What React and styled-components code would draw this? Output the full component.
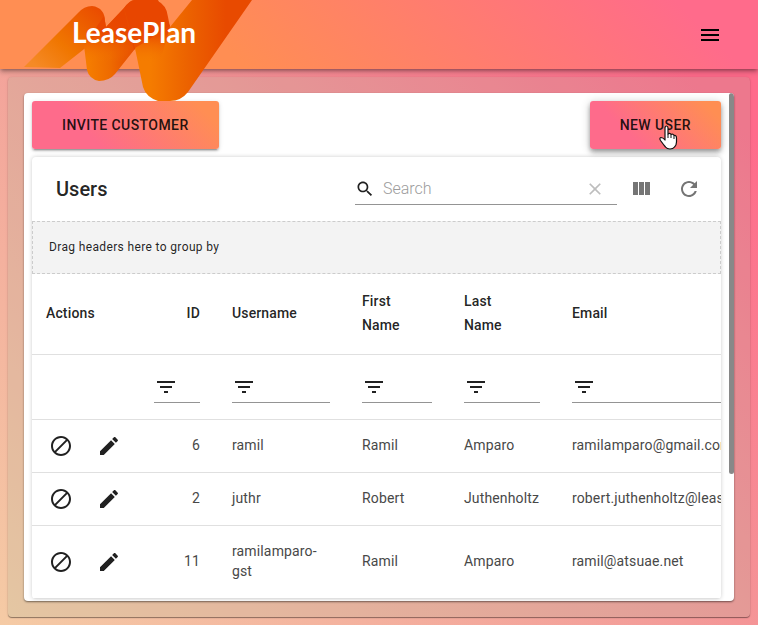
import React from 'react';
import styled, { createGlobalStyle, css } from 'styled-components';

const GlobalStyle = createGlobalStyle`
  *, *::before, *::after { box-sizing: border-box; }
  body {
    margin: 0;
    font-family: Roboto, "Liberation Sans", sans-serif;
    color: rgba(0, 0, 0, 0.87);
  }
`;

const Page = styled.div`
  display: flex;
  flex-direction: column;
  height: 100vh;
  background: linear-gradient(45deg, #f5cba5 0%, #f39a98 50%, #ff6b8b 90%);
`;

const Header = styled.header`
  position: relative;
  z-index: 2;
  flex: none;
  display: flex;
  align-items: center;
  justify-content: flex-end;
  height: 69px;
  padding: 0 36px;
  background: linear-gradient(45deg, #ff8e53 30%, #ff6b8b 90%);
  box-shadow: 0 2px 4px -1px rgba(0, 0, 0, 0.4), 0 4px 5px rgba(0, 0, 0, 0.14);
`;

const Logo = styled.svg`
  position: absolute;
  top: 0;
  left: 24px;
`;

const IconButton = styled.button`
  display: inline-flex;
  align-items: center;
  justify-content: center;
  flex: none;
  width: ${(p) => p.$size || 24}px;
  height: ${(p) => p.$size || 24}px;
  padding: 0;
  border: 0;
  background: none;
  color: ${(p) => p.$color || 'inherit'};
  cursor: pointer;
`;

const Glyph = styled.svg`
  display: block;
  flex: none;
  fill: currentColor;
`;

const Main = styled.main`
  flex: 1;
  min-height: 0;
  display: flex;
  margin: 8px;
  padding: 16px;
  border-radius: 4px;
  background: rgba(150, 185, 155, 0.17);
  box-shadow: 0 1px 1px rgba(0, 0, 0, 0.4), 0 0 3px rgba(0, 0, 0, 0.1);
`;

const Card = styled.section`
  flex: 1;
  min-width: 0;
  display: flex;
  overflow: hidden;
  border-radius: 4px;
  background: #fff;
  box-shadow: 0 1px 2px rgba(0, 0, 0, 0.5);
`;

const Scroller = styled.div`
  flex: 1;
  min-width: 0;
  overflow: auto;
  padding: 8px;
  scrollbar-width: none;
`;

const Rail = styled.div`
  flex: none;
  width: 5px;
`;

const Thumb = styled.div`
  height: 75%;
  border-radius: 3px;
  background: #888;
`;

const ButtonBar = styled.div`
  display: flex;
  justify-content: space-between;
  align-items: flex-start;
  margin-bottom: 8px;
`;

const GradientButton = styled.button`
  position: relative;
  height: 48px;
  padding: 0 30px;
  border: 0;
  border-radius: 3px;
  background: linear-gradient(45deg, #fe6b8b 30%, #ff8e53 90%);
  color: rgba(0, 0, 0, 0.87);
  font: 500 14px/24px Roboto, "Liberation Sans", sans-serif;
  letter-spacing: 0.03em;
  text-transform: uppercase;
  cursor: pointer;
  box-shadow: ${(p) =>
    p.$raised
      ? '0 2px 4px -1px rgba(0,0,0,.2), 0 4px 5px rgba(0,0,0,.2), 0 1px 10px rgba(0,0,0,.2)'
      : '0 3px 1px -2px rgba(0,0,0,.2), 0 2px 2px rgba(0,0,0,.2), 0 1px 5px rgba(0,0,0,.12)'};
`;

const Pointer = styled.svg`
  position: absolute;
  left: 68px;
  top: 24px;
`;

const Paper = styled.div`
  overflow: hidden;
  border-radius: 4px;
  background: #fff;
  box-shadow: 0 0 4px rgba(0, 0, 0, 0.2);
`;

const Toolbar = styled.div`
  display: flex;
  align-items: center;
  height: 64px;
  padding: 0 8px 0 24px;
`;

const Title = styled.h2`
  flex: 1;
  margin: 0;
  font-size: 20px;
  font-weight: 500;
  line-height: 32px;
`;

const SearchField = styled.label`
  display: flex;
  align-items: center;
  width: 262px;
  height: 32px;
  border-bottom: 1px solid #949494;
`;

const SearchInput = styled.input`
  flex: 1;
  min-width: 0;
  margin: 0 8px;
  padding: 0;
  border: 0;
  outline: 0;
  background: none;
  color: inherit;
  font: 300 16px/24px Roboto, "Liberation Sans", sans-serif;
  &::placeholder { color: #9c9c9c; opacity: 1; }
`;

const GroupBar = styled.div`
  padding: 16px;
  border: 1px dashed #ccc;
  background: #f3f3f3;
  font-size: 12px;
  line-height: 19px;
  letter-spacing: 0.03em;
`;

const TableClip = styled.div`
  overflow: hidden;
`;

const Table = styled.table`
  width: 100%;
  min-width: 764px;
  border-collapse: separate;
  border-spacing: 0;
  table-layout: fixed;
`;

const Column = styled.col`
  width: ${(p) => (p.$width ? p.$width + 'px' : 'auto')};
`;

const cell = css`
  padding: 16px;
  border-bottom: 1px solid #e0e0e0;
  text-align: ${(p) => (p.$right ? 'right' : 'left')};
  font-size: 14px;
  letter-spacing: 0.01em;
`;

const HeadCell = styled.th`
  ${cell}
  height: 81px;
  padding: ${(p) => (p.$right ? '14px 16px 16px' : '14px 32px 16px 16px')};
  font-weight: 500;
  line-height: 24px;

  &:first-child { padding-left: 14px; }
`;

const FilterCell = styled.td`
  ${cell}
  height: 65px;
`;

const FilterField = styled.div`
  display: flex;
  align-items: center;
  height: 32px;
  border-bottom: 1px solid #949494;
`;

const FilterInput = styled.input`
  flex: 1;
  min-width: 0;
  width: 0;
  padding: 0;
  border: 0;
  outline: 0;
  background: none;
`;

const BodyCell = styled.td`
  ${cell}
  height: 53px;
  padding: 15px 16px 17px;
  line-height: 20px;
  color: #484848;
`;

const ActionCell = styled(BodyCell)`
  padding: 0 17px;
`;

const Actions = styled.div`
  display: flex;
  gap: 24px;
  color: #212121;
`;

const PATHS = {
  menu: 'M3 18h18v-2H3v2zm0-5h18v-2H3v2zm0-7v2h18V6H3z',
  search:
    'M15.5 14h-.79l-.28-.27C15.41 12.59 16 11.11 16 9.5 16 5.91 13.09 3 9.5 3S3 5.91 3 9.5 5.91 16 9.5 16c1.61 0 3.09-.59 4.23-1.57l.27.28v.79l5 4.99L20.49 19l-4.99-5zm-6 0C7.01 14 5 11.99 5 9.5S7.01 5 9.5 5 14 7.01 14 9.5 11.99 14 9.5 14z',
  clear:
    'M19 6.41L17.59 5 12 10.59 6.41 5 5 6.41 10.59 12 5 17.59 6.41 19 12 13.41 17.59 19 19 17.59 13.41 12z',
  columns: 'M10 18h5V5h-5v13zm-6 0h5V5H4v13zM16 5v13h5V5h-5z',
  refresh:
    'M17.65 6.35C16.2 4.9 14.21 4 12 4c-4.42 0-7.99 3.58-7.99 8s3.57 8 7.99 8c3.73 0 6.84-2.55 7.73-6h-2.08c-.82 2.33-3.04 4-5.65 4-3.31 0-6-2.69-6-6s2.69-6 6-6c1.66 0 3.14.69 4.22 1.78L13 11h7V4l-2.35 2.35z',
  filter: 'M10 18h4v-2h-4v2zM3 6v2h18V6H3zm3 7h12v-2H6v2z',
  block:
    'M12 2C6.48 2 2 6.48 2 12s4.48 10 10 10 10-4.48 10-10S17.52 2 12 2zm0 18c-4.41 0-8-3.59-8-8 0-1.85.63-3.55 1.69-4.9L16.9 18.31C15.55 19.37 13.85 20 12 20zm6.31-3.1L7.1 5.69C8.45 4.63 10.15 4 12 4c4.41 0 8 3.59 8 8 0 1.85-.63 3.55-1.69 4.9z',
  edit: 'M3 17.25V21h3.75L17.81 9.94l-3.75-3.75L3 17.25zM20.71 7.04c.39-.39.39-1.02 0-1.41l-2.34-2.34c-.39-.39-1.02-.39-1.41 0l-1.83 1.83 3.75 3.75 1.83-1.83z',
};

const Flipped = styled(Glyph)`
  transform: scaleX(-1);
`;

function Icon({ name, size = 24, flip }) {
  const Shape = flip ? Flipped : Glyph;
  return (
    <Shape width={size} height={size} viewBox="0 0 24 24" aria-hidden="true">
      <path d={PATHS[name]} />
    </Shape>
  );
}

function BrandLogo() {
  return (
    <Logo width="230" height="102" viewBox="24 0 230 102" role="img" aria-label="LeasePlan">
      <defs>
        <linearGradient id="tail" gradientUnits="userSpaceOnUse" x1="98" y1="8" x2="40" y2="70">
          <stop offset="0" stopColor="#ea4c00" />
          <stop offset="0.6" stopColor="#f07600" />
          <stop offset="1" stopColor="#f58a26" />
        </linearGradient>
        <linearGradient id="middle" gradientUnits="userSpaceOnUse" x1="132" y1="48" x2="88" y2="50">
          <stop offset="0" stopColor="#e64a00" />
          <stop offset="0.5" stopColor="#ee6a00" />
          <stop offset="1" stopColor="#f57c00" />
        </linearGradient>
        <linearGradient id="right" gradientUnits="userSpaceOnUse" x1="226" y1="30" x2="150" y2="30">
          <stop offset="0" stopColor="#e84a00" />
          <stop offset="0.5" stopColor="#ec6200" />
          <stop offset="1" stopColor="#f57c00" />
        </linearGradient>
        <linearGradient id="bend" gradientUnits="userSpaceOnUse" x1="0" y1="10" x2="0" y2="60">
          <stop offset="0" stopColor="#ea4800" />
          <stop offset="1" stopColor="#f47c00" />
        </linearGradient>
        <linearGradient id="fade" gradientUnits="userSpaceOnUse" x1="0" y1="16" x2="0" y2="62">
          <stop offset="0" stopColor="#e84600" />
          <stop offset="0.4" stopColor="#e84600" stopOpacity="0.85" />
          <stop offset="1" stopColor="#f47c00" stopOpacity="0" />
        </linearGradient>
      </defs>
      <path fill="url(#tail)" d="M24 67L78 13Q84 6 92 6C101 7 105 13 105 21L106 27L88 46L60 68Z" />
      <path fill="url(#middle)" d="M84 45L106 27L124 8Q130 0 134 0H158L170 26L134 50L115 74Q109 81 99 81Q89 79 87 70Z" />
      <path fill="url(#fade)" d="M84 45L104 16L106 27L124 8L134 50L115 74Q109 81 99 81Q89 79 87 70Z" />
      <path fill="url(#right)" d="M192 0H252L188 92Q181 101 170 101H158Q146 97 143 87L135 48L170 27Z" />
      <path fill="url(#fade)" d="M124 8Q130 0 136 0H156Q167 5 168 17L170 27L160 62L138 62L135 48Z" />
      <text x="72" y="43" fill="#fff" fontFamily="Lato, sans-serif" fontSize="28" fontWeight="700">
        LeasePlan
      </text>
    </Logo>
  );
}

const COLUMNS = [
  { label: 'Actions', width: 106 },
  { label: 'ID', width: 78, right: true },
  { label: 'Username', width: 130 },
  { label: 'First Name', width: 102 },
  { label: 'Last Name', width: 108 },
  { label: 'Email' },
];

const USERS = [
  [6, 'ramil', 'Ramil', 'Amparo', 'ramilamparo@gmail.com'],
  [2, 'juthr', 'Robert', 'Juthenholtz', 'robert.juthenholtz@leaseplan.com'],
  [11, 'ramilamparo-gst', 'Ramil', 'Amparo', 'ramil@atsuae.net'],
];

export default function App() {
  return (
    <Page>
      <GlobalStyle />
      <Header>
        <BrandLogo />
        <IconButton aria-label="Open menu" $color="#000">
          <Icon name="menu" />
        </IconButton>
      </Header>
      <Main>
        <Card>
          <Scroller>
            <ButtonBar>
              <GradientButton>Invite Customer</GradientButton>
              <GradientButton $raised>
                New User
                <Pointer width="20" height="26" viewBox="0 0 20 26" aria-hidden="true">
                  <path
                    fill="#fff"
                    stroke="#111"
                    strokeWidth="1.2"
                    strokeLinejoin="round"
                    d="M7 3Q7 1 8.500 1Q10 1 10 3V9Q12 7.500 13 9.500Q15 8.500 16 10.500Q18.500 10 18.500 13V17Q18.500 20 16.500 22Q15 24 12 24Q9 24 7.500 22Q5 19 2.500 15.500Q1 13 3 12.500Q5 12.500 7 15Z"
                  />
                  <path stroke="#111" d="M10 9V13M13 10V13M16 11V14" />
                </Pointer>
              </GradientButton>
            </ButtonBar>
            <Paper>
              <Toolbar>
                <Title>Users</Title>
                <SearchField>
                  <Icon name="search" size={20} />
                  <SearchInput placeholder="Search" aria-label="Search" />
                  <IconButton aria-label="Clear search" $size={44} $color="#bdbdbd">
                    <Icon name="clear" size={20} />
                  </IconButton>
                </SearchField>
                <IconButton aria-label="Show columns" $size={48} $color="#757575">
                  <Icon name="columns" />
                </IconButton>
                <IconButton aria-label="Refresh" $size={48} $color="#757575">
                  <Icon name="refresh" />
                </IconButton>
              </Toolbar>
              <GroupBar>Drag headers here to group by</GroupBar>
              <TableClip>
                <Table>
                  <colgroup>
                    {COLUMNS.map((c) => (
                      <Column key={c.label} $width={c.width} />
                    ))}
                  </colgroup>
                  <thead>
                    <tr>
                      {COLUMNS.map((c) => (
                        <HeadCell key={c.label} scope="col" $right={c.right}>
                          {c.label}
                        </HeadCell>
                      ))}
                    </tr>
                  </thead>
                  <tbody>
                    <tr>
                      {COLUMNS.map((c, i) => (
                        <FilterCell key={c.label}>
                          {i > 0 && (
                            <FilterField>
                              <IconButton aria-label={`Filter options for ${c.label}`}>
                                <Icon name="filter" />
                              </IconButton>
                              <FilterInput aria-label={`Filter by ${c.label}`} />
                            </FilterField>
                          )}
                        </FilterCell>
                      ))}
                    </tr>
                    {USERS.map(([id, ...fields]) => (
                      <tr key={id}>
                        <ActionCell>
                          <Actions>
                            <IconButton aria-label={`Block ${fields[0]}`}>
                              <Icon name="block" flip />
                            </IconButton>
                            <IconButton aria-label={`Edit ${fields[0]}`}>
                              <Icon name="edit" />
                            </IconButton>
                          </Actions>
                        </ActionCell>
                        <BodyCell $right>{id}</BodyCell>
                        {fields.map((value, i) => (
                          <BodyCell key={i}>{value}</BodyCell>
                        ))}
                      </tr>
                    ))}
                  </tbody>
                </Table>
              </TableClip>
            </Paper>
          </Scroller>
          <Rail>
            <Thumb />
          </Rail>
        </Card>
      </Main>
    </Page>
  );
}
